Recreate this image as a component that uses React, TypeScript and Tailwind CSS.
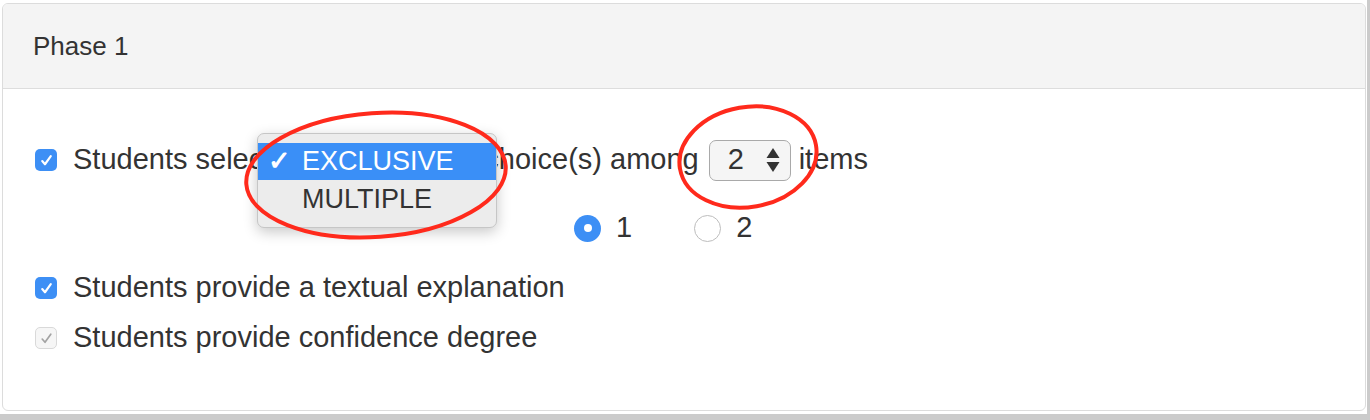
import React from "react";

const font = { fontFamily: '"Liberation Sans", Arial, sans-serif' };

function CheckBox({ disabled }: { disabled?: boolean }) {
  if (disabled) {
    return (
      <span className="flex h-[22px] w-[22px] shrink-0 items-center justify-center rounded-[5px] border border-[#d9d9d9] bg-[#f6f6f6]">
        <svg width="15" height="15" viewBox="0 0 14 14" fill="none">
          <path d="M3 7.5l2.6 3L11 3" stroke="#a3a3a3" strokeWidth="1.6" strokeLinecap="round" strokeLinejoin="round" />
        </svg>
      </span>
    );
  }
  return (
    <span className="flex h-[22px] w-[22px] shrink-0 items-center justify-center rounded-[5px] bg-[#3d8ff5]">
      <svg width="15" height="15" viewBox="0 0 14 14" fill="none">
        <path d="M3 7.5l2.6 3L11 3" stroke="#fff" strokeWidth="2" strokeLinecap="round" strokeLinejoin="round" />
      </svg>
    </span>
  );
}

function Radio({ checked, label }: { checked?: boolean; label: string }) {
  return (
    <div className="flex items-center">
      {checked ? (
        <span className="flex h-[27px] w-[27px] items-center justify-center rounded-full bg-[#3d8ff5]">
          <span className="h-[8px] w-[8px] rounded-full bg-white" />
        </span>
      ) : (
        <span className="h-[27px] w-[27px] rounded-full border border-[#bdbdbd] bg-white" />
      )}
      <span className="ml-[15px]">{label}</span>
    </div>
  );
}

export default function App() {
  return (
    <div
      className="relative h-[420px] w-[1370px] overflow-hidden border-b-[6px] border-r-[3px] border-[#cbcbcb] bg-white text-[#333]"
      style={font}
    >
      <div className="ml-[2px] mt-[3px] flex h-[408px] w-[1364px] flex-col overflow-hidden rounded-[6px] border border-[#dcdcdc]">
        <div className="flex h-[85px] items-center border-b border-[#dddddd] bg-[#f4f4f4] px-[30px] text-[26px]">
          Phase 1
        </div>

        <div className="flex flex-col text-[29px]">
          <div className="ml-[32px] mt-[51px] flex h-[40px] items-center">
            <CheckBox />
            <span className="ml-[16px]">Students select</span>
            <span className="ml-[8px] h-[38px] w-[197px] rounded-[6px] border border-[#c9c9c9] bg-[#f5f5f5]" />
            <span className="ml-[8px]">choice(s) among</span>
            <div className="ml-[10px] flex h-[41px] w-[82px] items-center justify-between rounded-[7px] border border-[#a9a9a9] bg-[#f5f5f5] pl-[18px] pr-[10px]">
              <span>2</span>
              <svg width="14" height="26" viewBox="0 0 14 26">
                <path d="M7 1L13.5 11H0.5Z" fill="#333" />
                <path d="M7 25L13.5 15H0.5Z" fill="#333" />
              </svg>
            </div>
            <span className="ml-[8px]">items</span>
          </div>

          <div className="ml-[571px] mt-[28px] flex h-[40px] items-center gap-[62px]">
            <Radio checked label="1" />
            <Radio label="2" />
          </div>

          <div className="ml-[32px] mt-[20px] flex h-[40px] items-center">
            <CheckBox />
            <span className="ml-[16px]">Students provide a textual explanation</span>
          </div>

          <div className="ml-[32px] mt-[10px] flex h-[40px] items-center">
            <CheckBox disabled />
            <span className="ml-[16px]">Students provide confidence degree</span>
          </div>
        </div>
      </div>

      {/* open select menu */}
      <div className="absolute left-[257px] top-[133px] flex h-[95px] w-[240px] flex-col rounded-[7px] border border-[#c6c6c6] bg-[#ececec] py-[9px] shadow-[0_4px_14px_rgba(0,0,0,0.22)]">
        <div className="flex h-[37px] items-center bg-[#3a8ff7] text-[27px] text-white">
          <span className="ml-[10px] w-[34px] text-[27px] font-bold">✓</span>
          <span>EXCLUSIVE</span>
        </div>
        <div className="flex h-[38px] items-center text-[27px] text-[#333]">
          <span className="ml-[44px]">MULTIPLE</span>
        </div>
      </div>

      {/* red annotation marks */}
      <svg className="pointer-events-none absolute left-0 top-0" width="1370" height="420">
        <ellipse cx="376" cy="175" rx="130" ry="62" transform="rotate(-4 376 175)" fill="none" stroke="#ff2a1c" strokeWidth="4" />
        <ellipse cx="748" cy="157" rx="69" ry="50" transform="rotate(-10 748 157)" fill="none" stroke="#ff2a1c" strokeWidth="4" />
      </svg>
    </div>
  );
}
